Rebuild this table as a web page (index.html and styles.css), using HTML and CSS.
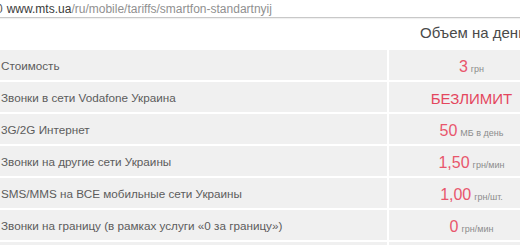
FILE: index.html
```html
<!DOCTYPE html>
<html lang="ru">
<head>
<meta charset="utf-8">
<link rel="stylesheet" href="styles.css">
</head>
<body>
<div class="addr"><span class="lock">0</span><span class="host">www.mts.ua</span><span class="path">/ru/mobile/tariffs/smartfon-standartnyij</span></div>
<div class="table">
  <div class="head"><div></div><div class="hcell">Объем на день</div></div>
  <div class="row"><div class="label">Стоимость</div><div class="val"><span class="num">3</span><span class="unit">грн</span></div></div>
  <div class="row"><div class="label">Звонки в сети Vodafone Украина</div><div class="val"><span class="big">БЕЗЛИМИТ</span></div></div>
  <div class="row"><div class="label">3G/2G Интернет</div><div class="val"><span class="num">50</span><span class="unit">МБ в день</span></div></div>
  <div class="row"><div class="label">Звонки на другие сети Украины</div><div class="val"><span class="num">1,50</span><span class="unit">грн/мин</span></div></div>
  <div class="row"><div class="label">SMS/MMS на ВСЕ мобильные сети Украины</div><div class="val"><span class="num">1,00</span><span class="unit">грн/шт.</span></div></div>
  <div class="row"><div class="label">Звонки на границу (в рамках услуги «0 за границу»)</div><div class="val"><span class="num">0</span><span class="unit">грн/мин</span></div></div>
  <div class="row"><div class="label"></div><div class="val"></div></div>
</div>
</body>
</html>
```
FILE: styles.css
```css
html, body {
  margin: 0;
  padding: 0;
  background: #ffffff;
  overflow: hidden;
  width: 520px;
  height: 245px;
  font-family: "Liberation Sans", Arial, sans-serif;
}
.addr {
  border-bottom: 1px solid #c8c8c8;
  font-size: 12px;
  white-space: nowrap;
  display: flex;
  align-items: center;
  padding-top: 1px;
  box-sizing: border-box;
  height: 18px;
  box-shadow: 0 1px 1px rgba(0,0,0,0.06);
}
.lock {
  color: #555;
  margin-left: -4px;
  margin-right: 4px;
}
.host {
  color: #3a3a3a;
}
.path {
  color: #909090;
}
.table {
  display: flex;
  flex-direction: column;
  gap: 2px;
  width: 554px;
}
.head {
  height: 30px;
  display: grid;
  grid-template-columns: 387px 165px;
  column-gap: 2px;
}
.hcell {
  font-size: 15px;
  color: #4a4a4a;
  text-align: center;
  line-height: 30px;
  white-space: nowrap;
  padding-left: 3px;
}
.row {
  height: 30px;
  display: grid;
  grid-template-columns: 387px 165px;
  column-gap: 2px;
}
.label, .val {
  background: #f0f0f0;
  display: flex;
  align-items: center;
  white-space: nowrap;
}
.label {
  padding-left: 1px;
  font-size: 11.7px;
  color: #5c5c5c;
}
.val {
  justify-content: center;
  align-items: baseline;
  padding-top: 8px;
  box-sizing: border-box;
}
.num {
  color: #e8566c;
  font-size: 16px;
  margin-right: 3px;
}
.unit {
  color: #8c8c8c;
  font-size: 9px;
}
.big {
  color: #e4475e;
  font-size: 15px;
}
```
